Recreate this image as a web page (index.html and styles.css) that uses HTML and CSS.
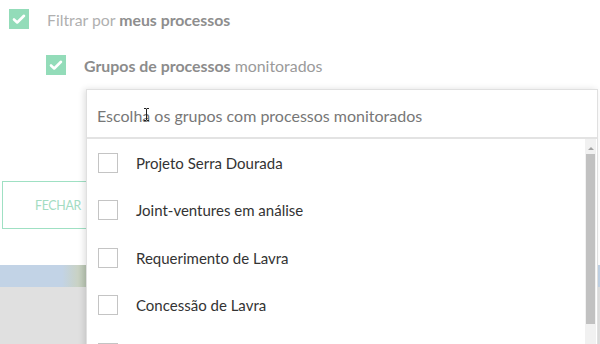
FILE: index.html
```html
<!DOCTYPE html>
<html lang="pt">
<head>
    <meta charset="UTF-8">
    <title>Filtros</title>
    <link rel="stylesheet" href="styles.css">
</head>
<body>
    <div class="page">
        <div class="filters">
            <label class="check-row">
                <span class="check on">
                    <svg viewBox="0 0 20 20" width="20" height="20"><path d="M5 10.5l3.2 3L15 6.8" fill="none" stroke="#fff" stroke-width="2.6" stroke-linecap="round" stroke-linejoin="round"/></svg>
                </span>
                <span class="check-label">Filtrar por <b>meus processos</b></span>
            </label>
            <label class="check-row sub">
                <span class="check on">
                    <svg viewBox="0 0 20 20" width="20" height="20"><path d="M5 10.5l3.2 3L15 6.8" fill="none" stroke="#fff" stroke-width="2.6" stroke-linecap="round" stroke-linejoin="round"/></svg>
                </span>
                <span class="check-label"><strong>Grupos de processos</strong> monitorados</span>
            </label>
        </div>

        <div class="actions">
            <button class="btn-outline">FECHAR</button>
        </div>

        <div class="map-strip"></div>
        <div class="map-base"></div>

        <!-- dropdown aberto por cima do conteúdo -->
        <div class="dropdown">
            <div class="search">
                <span class="placeholder">Escolha os grupos com processos monitorados</span>
                <svg class="ibeam" viewBox="0 0 7 13" width="7" height="13"><path d="M1 0.5h2l.5.5.5-.5h2M3.5 1v11M1 12.5h2l.5-.5.5.5h2" fill="none" stroke="#222" stroke-width="1"/></svg>
            </div>
            <div class="list-wrap">
                <ul class="options">
                    <li><span class="box"></span>Projeto Serra Dourada</li>
                    <li><span class="box"></span>Joint-ventures em análise</li>
                    <li><span class="box"></span>Requerimento de Lavra</li>
                    <li><span class="box"></span>Concessão de Lavra</li>
                    <li><span class="box"></span></li>
                </ul>
                <div class="scrollbar">
                    <div class="arrow"></div>
                    <div class="thumb"></div>
                </div>
            </div>
        </div>
    </div>
</body>
</html>
```

FILE: styles.css
```css
body {
    margin: 0;
    font-family: Lato, "Open Sans", sans-serif;
    background-color: #fff;
}
.page {
    position: relative;
    width: 600px;
    height: 344px;
    overflow: hidden;
}
.filters {
    padding: 9px 0 0 9px;
    height: 172px;
    box-sizing: border-box;
}
.check-row {
    display: flex;
    align-items: center;
    gap: 18px;
    height: 20px;
    font-size: 15.8px;
}
.check-row.sub {
    margin: 26px 0 0 37px;
    font-size: 15.9px;
}
.check {
    width: 20px;
    height: 20px;
    display: block;
}
.check.on { background-color: #93dcb9; }
.check svg { display: block; }
.check-label { color: #b0b0b0; }
.check-label b { color: #8e8e8e; font-weight: 700; }
.sub .check-label { color: #9a9a9a; }
.sub .check-label strong { color: #8c8c8c; font-weight: 700; }

.actions {
    padding: 9px 0 0 2px;
    height: 93px;
    box-sizing: border-box;
}
.btn-outline {
    width: 200px;
    height: 48px;
    background: #fff;
    border: 1px solid #9fe0c3;
    color: #a3dcc2;
    font-family: inherit;
    font-size: 12.4px;
    letter-spacing: -0.3px;
    text-align: left;
    padding-left: 32px;
}
.map-strip {
    height: 22px;
    background-color: #c2d3e6;
    background-image: radial-gradient(circle at 88% 40%, rgba(160,180,150,.8) 0 2px, transparent 3px),
        radial-gradient(circle at 72% 60%, rgba(160,180,150,.7) 0 1px, transparent 2px),
        linear-gradient(90deg, transparent 62px, #c9d2c4 78px, #b9c6b3 86px, #c2d3e6 88px);
}
.map-base {
    height: 60px;
    background-color: #e0e0e0;
}

.dropdown {
    position: absolute;
    left: 86px;
    top: 89px;
    width: 512px;
    height: 270px;
    background: #fff;
    border: 1px solid #e0e0e0;
    box-sizing: border-box;
    box-shadow: -2px 0 6px rgba(0,0,0,0.12);
}
.search {
    position: relative;
    height: 49px;
    border-bottom: 2px solid #e3e3e3;
    display: flex;
    align-items: center;
    padding-left: 10px;
    box-sizing: border-box;
}
.placeholder {
    color: #777;
    font-size: 16px;
    margin-top: 4px;
}
.ibeam {
    position: absolute;
    left: 56px;
    top: 18px;
}
.list-wrap {
    display: flex;
}
.options {
    flex: 1;
    list-style: none;
    margin: 0;
    padding: 0;
}
.options li {
    height: 47.5px;
    display: flex;
    align-items: center;
    padding-left: 11px;
    font-size: 15px;
    color: #333;
}
.box {
    width: 18px;
    height: 18px;
    border: 1px solid #c4c4c4;
    margin-right: 18px;
}
.scrollbar {
    width: 11px;
    margin-right: 1px;
    background-color: #f1f1f1;
    padding-top: 3px;
}
.arrow {
    width: 0;
    height: 0;
    margin: 5px auto 4px;
    border-left: 3px solid transparent;
    border-right: 3px solid transparent;
    border-bottom: 3px solid #a3a3a3;
}
.thumb {
    height: 170px;
    margin: 0 1px;
    background-color: #c1c1c1;
}
```
